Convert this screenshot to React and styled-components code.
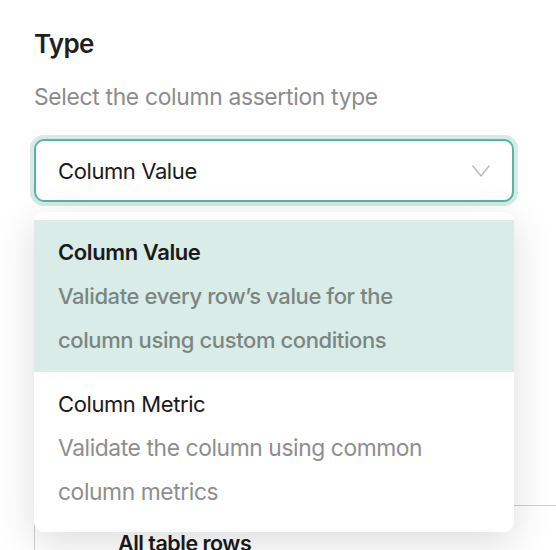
import React from 'react';
import styled, { createGlobalStyle } from 'styled-components';

const GlobalStyle = createGlobalStyle`
  html, body {
    margin: 0;
    padding: 0;
    background: #ffffff;
    overflow: hidden;
  }
  body {
    font-family: Inter, "Noto Sans", sans-serif;
    -webkit-font-smoothing: antialiased;
  }
`;

const options = [
  {
    id: 'value',
    label: 'Column Value',
    description: 'Validate every row’s value for the column using custom conditions',
  },
  {
    id: 'metric',
    label: 'Column Metric',
    description: 'Validate the column using common column metrics',
  },
];

function Chevron() {
  return (
    <svg width="18" height="12" viewBox="0 0 18 12" fill="none">
      <polyline points="1,1 9,11 17,1" stroke="#b9b9b9" strokeWidth="1.4" strokeLinejoin="round" strokeLinecap="round" />
    </svg>
  );
}

export default function App() {
  const [selected] = React.useState('value');
  const current = options.find(o => o.id === selected);

  return (
    <>
      <GlobalStyle />
      <Page>
        <Title>Type</Title>
        <Subtitle>Select the column assertion type</Subtitle>
        <SelectWrap>
          <SelectBox>
            <SelectValue>{current.label}</SelectValue>
            <Chevron />
          </SelectBox>
          <Menu>
            {options.map(o => (
              <Option key={o.id} $active={o.id === selected}>
                <OptionLabel $active={o.id === selected}>{o.label}</OptionLabel>
                <OptionDesc $active={o.id === selected}>{o.description}</OptionDesc>
              </Option>
            ))}
          </Menu>
        </SelectWrap>
        <RowsCard>
          <RowsLabel>All table rows</RowsLabel>
        </RowsCard>
      </Page>
    </>
  );
}

const Page = styled.div`
  padding: 26px 0 0 34px;
  width: 480px;
`;

const Title = styled.h2`
  margin: 0;
  font-size: 26px;
  line-height: 36px;
  font-weight: 600;
  color: #1f1f1f;
  letter-spacing: -0.7px;
`;

const Subtitle = styled.p`
  margin: 20px 0 0;
  font-size: 22.8px;
  line-height: 30px;
  color: #8c8c8c;
  letter-spacing: -0.3px;
`;

const SelectWrap = styled.div`
  position: relative;
  margin-top: 27px;
`;

const SelectBox = styled.div`
  box-sizing: border-box;
  height: 63px;
  display: flex;
  align-items: center;
  justify-content: space-between;
  padding: 0 22px 0 22px;
  border: 2px solid #5ab3a3;
  border-radius: 10px;
  box-shadow: 0 0 0 4px #d6ebe6;
  background: #ffffff;
`;

const SelectValue = styled.span`
  font-size: 22px;
  color: #1a1a1a;
  letter-spacing: -0.4px;
`;

const Menu = styled.div`
  position: absolute;
  top: 73px;
  left: 0;
  right: 0;
  z-index: 5;
  padding: 8px 0;
  background: #ffffff;
  border-radius: 10px;
  box-shadow: 0 10px 40px rgba(0, 0, 0, 0.14);
`;

const Option = styled.div`
  padding: 10px 24px;
  background: ${p => (p.$active ? '#d9ece7' : 'transparent')};
`;

const OptionLabel = styled.div`
  font-size: 22px;
  line-height: 44px;
  font-weight: ${p => (p.$active ? 600 : 400)};
  color: #1a1a1a;
  letter-spacing: -0.4px;
`;

const OptionDesc = styled.div`
  font-size: ${p => (p.$active ? '22px' : '22.8px')};
  line-height: 44px;
  font-weight: ${p => (p.$active ? 500 : 400)};
  color: ${p => (p.$active ? '#7b8682' : '#8e8e8e')};
  letter-spacing: -0.4px;
  max-width: 400px;
`;

const RowsCard = styled.div`
  margin-top: 303px;
  width: 560px;
  height: 80px;
  border: 1px solid #cfcfcf;
  border-radius: 8px 0 0 0;
  box-sizing: border-box;
  padding: 24px 0 0 83px;
`;

const RowsLabel = styled.div`
  font-size: 21.5px;
  font-weight: 600;
  color: #1a1a1a;
  letter-spacing: -0.5px;
`;
